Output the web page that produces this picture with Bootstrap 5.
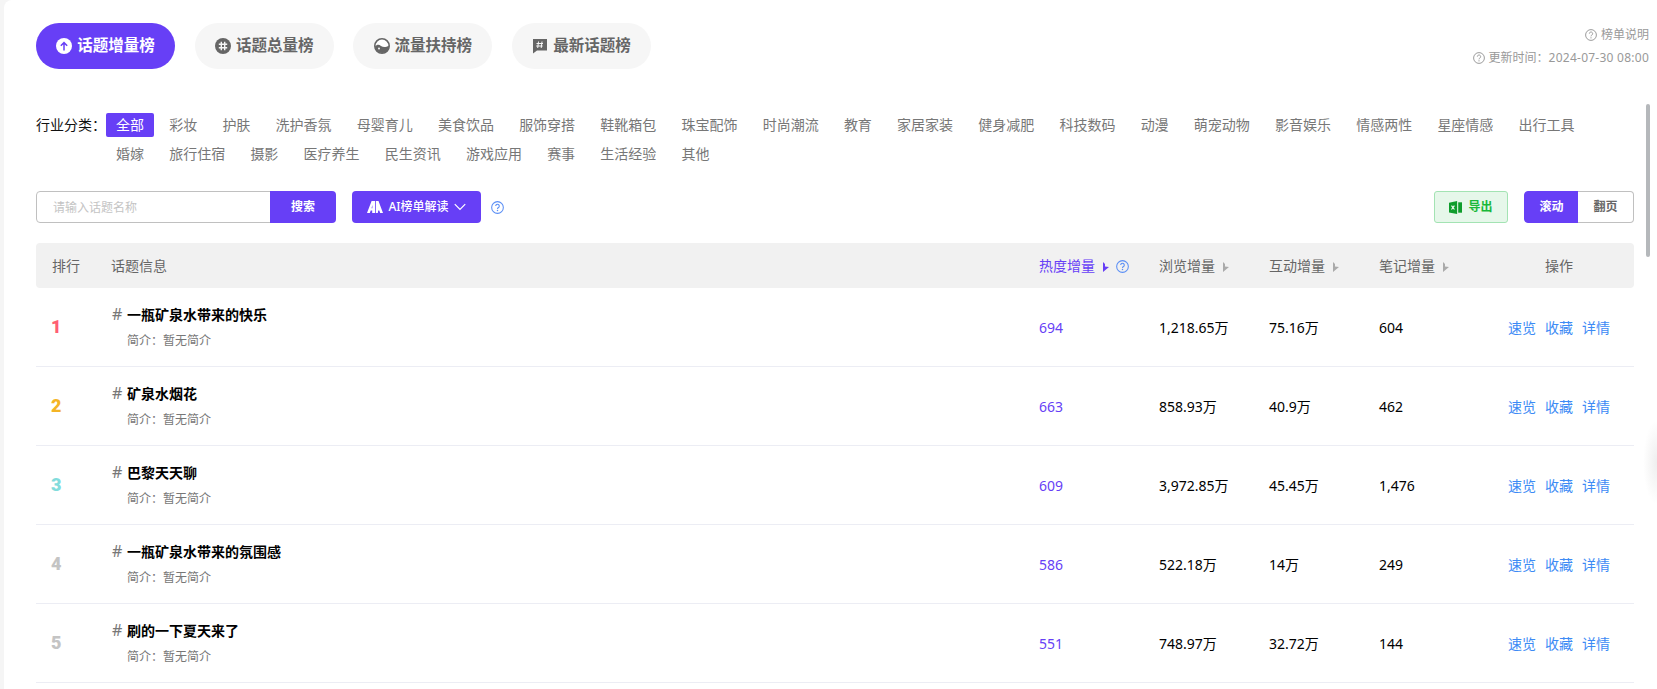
<!DOCTYPE html>
<html lang="zh-CN">
<head>
<meta charset="utf-8">
<title>话题增量榜</title>
<link href="https://cdn.jsdelivr.net/npm/bootstrap@5.3.0/dist/css/bootstrap.min.css" rel="stylesheet">
<style>
html,body{height:100%;overflow:hidden}
body{background:#f5f5f5;font-family:"Noto Sans","Noto Sans CJK SC",sans-serif;font-size:14px;color:#000}
.sheet{position:relative;margin-left:4px;height:689px;background:#fff;border-radius:8px 0 0 0;padding:23px 8px 0 32px;overflow:hidden}
.pill-tab{width:139px;height:46px;border-radius:23px;background:#f6f6f6;color:#666;font-size:15.5px;font-weight:700;gap:5px;border:0;padding:0}
.pill-tab.on{background:#673ff6;color:#fff}
.pill-tab svg{width:16px;height:16px;flex:none}
.tabs-gap{gap:19.7px}
.meta-line{font-size:12px;line-height:23px;color:#999;gap:4px;justify-content:flex-end}
.meta-line svg{width:12px;height:12px;flex:none}
.date-txt{letter-spacing:.25px}
.filter-wrap{margin-top:44px;margin-right:15px}
.filter-label{width:70px;flex:none;line-height:23px;color:#111}
.chip{height:24px;line-height:23px;padding:0 10px;margin:0 5.2px 5px 0;border-radius:2px;color:#777}
.chip.on{background:#673ff6;color:#fff}
.tool-row{margin-top:20px;margin-right:15px;height:32px}
.find-box{width:300px;flex-wrap:nowrap}
.find-box .form-control{height:32px;font-size:12px;padding:0 16px;border-color:#c0c0c0;border-radius:4px 0 0 4px;box-shadow:none}
.find-box .form-control::placeholder{color:#c4c4c4}
.act-btn{height:32px;font-size:12px;font-weight:700;background:#673ff6;border:0;color:#fff;border-radius:4px;padding:0}
.find-box .act-btn{width:66px;border-radius:0 4px 4px 0}
.ai-btn{width:129px;margin-left:16px;font-weight:500;gap:5px}
.ai-btn svg.logo{width:16px;height:12px}
.ai-btn svg.chev{width:12px;height:8px}
.hint-ic{width:13px;height:13px;margin-left:10px}
.export-btn{width:74px;height:32px;padding:0;border:1px solid #a3e3b3;background:#e6f7ea;color:#19b83a;font-size:12px;font-weight:700;border-radius:3px;gap:6px}
.export-btn svg{width:13px;height:13px}
.mode-group{margin-left:16px}
.mode-group .btn{height:32px;width:55px;padding:0;font-size:12px;font-weight:700;border-radius:4px}
.mode-group .btn.first{background:#673ff6;border:1px solid #673ff6;color:#fff}
.mode-group .btn.second{background:#fff;border:1px solid #c0c0c0;border-left:0;color:#666;width:56px}
.rank-table{table-layout:fixed;width:1598px;margin:20px 0 0;border-collapse:separate;border-spacing:0}
.rank-table>:not(caption)>*>*{padding:0;background:transparent;box-shadow:none;vertical-align:middle;border-bottom:1px solid #ecedf4;color:#000}
.rank-table>thead>tr>th{height:45px;background:#f1f1f1;border-bottom:0;font-weight:400;color:#666}
.rank-table>thead>tr>th:first-child{padding-left:16px;border-radius:4px 0 0 4px}
.rank-table>thead>tr>th:last-child{border-radius:0 4px 4px 0;text-align:center}
.rank-table>thead>tr>th.hot-col{color:#673ff6}
.caret-ic{display:inline-block;width:6px;height:10px;margin-left:8px;vertical-align:-1px}
.head-hint{margin-left:7px;vertical-align:-2px}
.rank-table>tbody>tr>td{height:79px}
.rank-table>tbody>tr>td:first-child{padding-left:15px}
.rank-num{font-family:Roboto,sans-serif;font-weight:900;font-size:18px;line-height:1}
.rank-table>tbody>tr>td.r1{color:#ff5f73}
.rank-table>tbody>tr>td.r2{color:#f4b426}
.rank-table>tbody>tr>td.r3{color:#82dcdc}
.rank-table>tbody>tr>td.r4{color:#c4c4c4}
.topic-cell{vertical-align:top!important;padding-top:16px!important}
.topic-name{line-height:20px;font-weight:700;color:#000}
.topic-name i{display:inline-block;font-style:normal;font-weight:400;font-size:16px;line-height:20px;color:#777;width:16px;padding-left:1px}
.topic-desc{margin:6px 0 0 16px;line-height:20px;font-size:12px;color:#777}
.rank-table>tbody>tr>td.hot-val{color:#673ff6}
.op-links{gap:9px;justify-content:center}
.op-links a{color:#3d8bf5;text-decoration:none}
.fake-scroll{position:absolute;right:7px;top:104px;width:4px;height:153px;border-radius:2px;background:#b5b8bb}
.edge-glow{position:absolute;right:0;top:420px;width:14px;height:85px;background:radial-gradient(ellipse at right center,#eeeeee 0,rgba(255,255,255,0) 70%)}
</style>
</head>
<body>
<div class="sheet">
  <div class="d-flex justify-content-between align-items-center">
    <div class="d-flex tabs-gap">
      <button class="btn pill-tab on d-flex align-items-center justify-content-center">
        <svg viewBox="0 0 16 16"><circle cx="8" cy="8" r="8" fill="#fff"/><path d="M8 12.500V5M4.800 7.800 8 4.600l3.200 3.200" fill="none" stroke="#673ff6" stroke-width="1.500"/></svg>话题增量榜</button>
      <button class="btn pill-tab d-flex align-items-center justify-content-center">
        <svg viewBox="0 0 16 16"><circle cx="8" cy="8" r="8" fill="#666"/><path d="M6.300 3.800v8.400M9.700 3.800v8.400M3.800 6.300h8.400M3.800 9.700h8.400" stroke="#f6f6f6" stroke-width="1.400"/></svg>话题总量榜</button>
      <button class="btn pill-tab d-flex align-items-center justify-content-center">
        <svg viewBox="0 0 16 16"><circle cx="8" cy="8" r="7.200" fill="#fff" stroke="#666" stroke-width="1.600"/><path d="M1 8.500c2-2.200 4-2 6-.6s4.500 1.600 8-.2A7 7 0 0 1 1 8.500z" fill="#666"/><circle cx="5" cy="10.500" r="1" fill="#f6f6f6"/></svg>流量扶持榜</button>
      <button class="btn pill-tab d-flex align-items-center justify-content-center">
        <svg viewBox="0 0 16 16"><path d="M1 1h14v11.500H5L1 15.500z" fill="#666"/><path d="M6.500 3.500l-.8 6.500M10 3.500l-.8 6.500M4.500 5.500h6.500M4.200 8h6.500" stroke="#f6f6f6" stroke-width="1"/></svg>最新话题榜</button>
    </div>
    <div>
      <div class="d-flex align-items-center meta-line">
        <svg viewBox="0 0 16 16"><circle cx="8" cy="8" r="7.200" fill="none" stroke="#999" stroke-width="1.300"/><path d="M5.800 6.200a2.200 2.200 0 1 1 3.400 1.800c-.8.500-1.200 1-1.200 1.800" fill="none" stroke="#999" stroke-width="1.300"/><circle cx="8" cy="11.800" r=".9" fill="#999"/></svg>
        <span>榜单说明</span></div>
      <div class="d-flex align-items-center meta-line">
        <svg viewBox="0 0 16 16"><circle cx="8" cy="8" r="7.200" fill="none" stroke="#999" stroke-width="1.300"/><path d="M5.800 6.200a2.200 2.200 0 1 1 3.400 1.800c-.8.500-1.200 1-1.200 1.800" fill="none" stroke="#999" stroke-width="1.300"/><circle cx="8" cy="11.800" r=".9" fill="#999"/></svg>
        <span>更新时间：<span class="date-txt">2024-07-30 08:00</span></span></div>
    </div>
  </div>

  <div class="d-flex filter-wrap">
    <div class="filter-label">行业分类：</div>
    <div class="d-flex flex-wrap flex-grow-1">
      <span class="chip on">全部</span><span class="chip">彩妆</span><span class="chip">护肤</span><span class="chip">洗护香氛</span><span class="chip">母婴育儿</span><span class="chip">美食饮品</span><span class="chip">服饰穿搭</span><span class="chip">鞋靴箱包</span><span class="chip">珠宝配饰</span><span class="chip">时尚潮流</span><span class="chip">教育</span><span class="chip">家居家装</span><span class="chip">健身减肥</span><span class="chip">科技数码</span><span class="chip">动漫</span><span class="chip">萌宠动物</span><span class="chip">影音娱乐</span><span class="chip">情感两性</span><span class="chip">星座情感</span><span class="chip">出行工具</span><span class="chip">婚嫁</span><span class="chip">旅行住宿</span><span class="chip">摄影</span><span class="chip">医疗养生</span><span class="chip">民生资讯</span><span class="chip">游戏应用</span><span class="chip">赛事</span><span class="chip">生活经验</span><span class="chip">其他</span>
    </div>
  </div>

  <div class="d-flex align-items-center tool-row">
    <div class="input-group find-box">
      <input class="form-control" type="text" placeholder="请输入话题名称">
      <button class="btn act-btn">搜索</button>
    </div>
    <button class="btn act-btn ai-btn d-flex align-items-center justify-content-center">
      <svg class="logo" viewBox="0 0 16 12"><path d="M0 12 4.600 0h3.400v12H5.200V9.500H3.700L2.800 12zM4.500 7.300h.9V4z" fill="#fff"/><path d="M8.800 0h2.700L16 12h-2.800l-.9-2.500h-1.100L10.800 12H8.800z" fill="#fff"/></svg>
      AI榜单解读
      <svg class="chev" viewBox="0 0 11 7"><path d="M.7.800 5.500 5.700 10.300.8" fill="none" stroke="#fff" stroke-width="1.100"/></svg>
    </button>
    <svg class="hint-ic" viewBox="0 0 16 16"><circle cx="8" cy="8" r="7.200" fill="none" stroke="#5b8ff5" stroke-width="1.300"/><path d="M5.800 6.200a2.200 2.200 0 1 1 3.400 1.800c-.8.500-1.200 1-1.200 1.800" fill="none" stroke="#5b8ff5" stroke-width="1.300"/><circle cx="8" cy="11.800" r=".9" fill="#5b8ff5"/></svg>
    <button class="btn export-btn d-flex align-items-center justify-content-center ms-auto">
      <svg viewBox="0 0 12 12"><path d="M0 1.500 7.500 0v12L0 10.500z" fill="#0f9d2c"/><path d="M8.500 1.200H12v9.600H8.500z" fill="#0f9d2c"/><path d="M2.300 4.200 5 7.800M5 4.200 2.300 7.800" stroke="#fff" stroke-width="1"/></svg>导出</button>
    <div class="btn-group mode-group">
      <button class="btn first">滚动</button>
      <button class="btn second">翻页</button>
    </div>
  </div>

  <table class="table rank-table">
    <colgroup><col style="width:75px"><col style="width:928px"><col style="width:120px"><col style="width:110px"><col style="width:110px"><col style="width:105px"><col style="width:150px"></colgroup>
    <thead>
      <tr>
        <th>排行</th>
        <th>话题信息</th>
        <th class="hot-col">热度增量<svg class="caret-ic" viewBox="0 0 6 10"><path d="M0 0v10l6-5-4-.5V2z" fill="#673ff6"/></svg><svg class="hint-ic head-hint" viewBox="0 0 16 16"><circle cx="8" cy="8" r="7.200" fill="none" stroke="#5b8ff5" stroke-width="1.300"/><path d="M5.800 6.200a2.200 2.200 0 1 1 3.400 1.800c-.8.500-1.200 1-1.200 1.800" fill="none" stroke="#5b8ff5" stroke-width="1.300"/><circle cx="8" cy="11.800" r=".9" fill="#5b8ff5"/></svg></th>
        <th>浏览增量<svg class="caret-ic" viewBox="0 0 6 10"><path d="M0 0v10l6-5-4-.5V2z" fill="#aaa"/></svg></th>
        <th>互动增量<svg class="caret-ic" viewBox="0 0 6 10"><path d="M0 0v10l6-5-4-.5V2z" fill="#aaa"/></svg></th>
        <th>笔记增量<svg class="caret-ic" viewBox="0 0 6 10"><path d="M0 0v10l6-5-4-.5V2z" fill="#aaa"/></svg></th>
        <th>操作</th>
      </tr>
    </thead>
    <tbody>
      <tr>
        <td class="rank-num r1">1</td>
        <td class="topic-cell"><div class="topic-name"><i>#</i>一瓶矿泉水带来的快乐</div><div class="topic-desc">简介：暂无简介</div></td>
        <td class="hot-val">694</td><td>1,218.65万</td><td>75.16万</td><td>604</td>
        <td><div class="d-flex op-links"><a href="#">速览</a><a href="#">收藏</a><a href="#">详情</a></div></td>
      </tr>
      <tr>
        <td class="rank-num r2">2</td>
        <td class="topic-cell"><div class="topic-name"><i>#</i>矿泉水烟花</div><div class="topic-desc">简介：暂无简介</div></td>
        <td class="hot-val">663</td><td>858.93万</td><td>40.9万</td><td>462</td>
        <td><div class="d-flex op-links"><a href="#">速览</a><a href="#">收藏</a><a href="#">详情</a></div></td>
      </tr>
      <tr>
        <td class="rank-num r3">3</td>
        <td class="topic-cell"><div class="topic-name"><i>#</i>巴黎天天聊</div><div class="topic-desc">简介：暂无简介</div></td>
        <td class="hot-val">609</td><td>3,972.85万</td><td>45.45万</td><td>1,476</td>
        <td><div class="d-flex op-links"><a href="#">速览</a><a href="#">收藏</a><a href="#">详情</a></div></td>
      </tr>
      <tr>
        <td class="rank-num r4">4</td>
        <td class="topic-cell"><div class="topic-name"><i>#</i>一瓶矿泉水带来的氛围感</div><div class="topic-desc">简介：暂无简介</div></td>
        <td class="hot-val">586</td><td>522.18万</td><td>14万</td><td>249</td>
        <td><div class="d-flex op-links"><a href="#">速览</a><a href="#">收藏</a><a href="#">详情</a></div></td>
      </tr>
      <tr>
        <td class="rank-num r4">5</td>
        <td class="topic-cell"><div class="topic-name"><i>#</i>刷的一下夏天来了</div><div class="topic-desc">简介：暂无简介</div></td>
        <td class="hot-val">551</td><td>748.97万</td><td>32.72万</td><td>144</td>
        <td><div class="d-flex op-links"><a href="#">速览</a><a href="#">收藏</a><a href="#">详情</a></div></td>
      </tr>
    </tbody>
  </table>
  <div class="fake-scroll"></div>
  <div class="edge-glow"></div>
</div>
<script src="https://cdn.jsdelivr.net/npm/bootstrap@5.3.0/dist/js/bootstrap.bundle.min.js"></script>
</body>
</html>
